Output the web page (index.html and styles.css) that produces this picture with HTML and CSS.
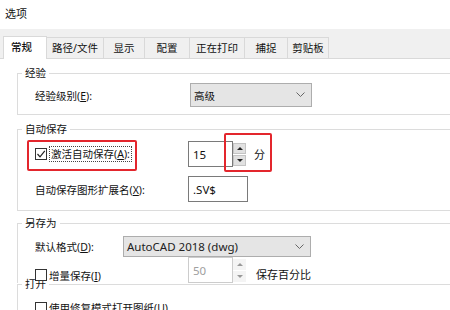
FILE: index.html
```html
<!DOCTYPE html>
<html lang="zh-CN">
<head>
    <meta charset="UTF-8">
    <title>选项</title>
    <link rel="stylesheet" href="styles.css">
</head>
<body>
    <div class="title">选项</div>
    <!-- 选项卡 -->
    <div class="tabbar">
        <div class="tab active t1">常规</div>
        <div class="tab t2">路径/文件</div>
        <div class="tab t3">显示</div>
        <div class="tab t4">配置</div>
        <div class="tab t5">正在打印</div>
        <div class="tab t6">捕捉</div>
        <div class="tab t7">剪贴板</div>
    </div>
    <div class="panel">
        <!-- 经验 -->
        <fieldset class="group g-exp">
            <legend>经验</legend>
            <div class="row">
                <span class="label">经验级别(<u>E</u>):</span>
                <div class="select sel-level">
                    <span>高级</span>
                    <svg class="chev" width="9" height="6" viewBox="0 0 9 6"><path d="M0.5 0.5 L4.5 4.5 L8.5 0.5" fill="none" stroke="#666" stroke-width="1"/></svg>
                </div>
            </div>
        </fieldset>
        <!-- 自动保存 -->
        <fieldset class="group g-auto">
            <legend>自动保存</legend>
            <div class="row mark-row">
                <label class="check">
                    <span class="box"><svg width="10" height="10" viewBox="0 0 10 10"><path d="M1.5 5 L4 7.8 L8.8 1.8" fill="none" stroke="#222" stroke-width="1.2"/></svg></span>
                    <span class="focus">激活自动保存(<u>A</u>):</span>
                </label>
                <div class="spin-field">
                    <div class="input num">15</div>
                    <div class="spinner">
                        <span class="btn up"></span>
                        <span class="btn down"></span>
                    </div>
                    <span class="unit">分</span>
                </div>
                <span class="redbox rb1"></span>
                <span class="redbox rb2"></span>
            </div>
            <div class="row row-ext">
                <span class="label">自动保存图形扩展名(<u>X</u>):</span>
                <div class="input ext">.SV$</div>
            </div>
        </fieldset>
        <!-- 另存为 -->
        <fieldset class="group g-save">
            <legend>另存为</legend>
            <div class="row row-fmt">
                <span class="label">默认格式(<u>D</u>):</span>
                <div class="select sel-fmt">
                    <span class="latin">AutoCAD 2018 (dwg)</span>
                    <svg class="chev" width="9" height="6" viewBox="0 0 9 6"><path d="M0.5 0.5 L4.5 4.5 L8.5 0.5" fill="none" stroke="#666" stroke-width="1"/></svg>
                </div>
            </div>
            <div class="row row-inc">
                <label class="check">
                    <span class="box"></span>
                    <span>增量保存(<u>I</u>)</span>
                </label>
                <div class="spin-field disabled">
                    <div class="input num">50</div>
                    <div class="spinner">
                        <span class="btn up"></span>
                        <span class="btn down"></span>
                    </div>
                    <span class="unit">保存百分比</span>
                </div>
            </div>
        </fieldset>
        <!-- 打开 -->
        <fieldset class="group g-open">
            <legend>打开</legend>
            <div class="row">
                <label class="check">
                    <span class="box"></span>
                    <span>使用修复模式打开图纸(<u>U</u>)</span>
                </label>
            </div>
        </fieldset>
    </div>
</body>
</html>
```

FILE: styles.css
```css
:root {
    --text-color: #111111;
    --line-color: #dcdcdc;
    --tab-bg: #f0f0f0;
    --tab-border: #d9d9d9;
    --control-bg: #e5e5e5;
    --control-border: #adadad;
    --input-border: #7a7a7a;
    --red: #e3262d;
}
body {
    margin: 0;
    width: 450px;
    height: 310px;
    overflow: hidden;
    background-color: #ffffff;
    color: var(--text-color);
    font-family: "Noto Sans", "Noto Sans CJK SC", sans-serif;
    font-size: 10.5px;
}
u {
    text-decoration: underline;
    text-underline-offset: 1px;
}
.title {
    height: 29px;
    line-height: 28px;
    padding-left: 5px;
    font-size: 11px;
}
/* 选项卡 */
.tabbar {
    height: 30px;
    background-color: var(--tab-bg);
    border-bottom: 1px solid var(--tab-border);
    display: flex;
    align-items: flex-end;
    padding-left: 3px;
    box-sizing: border-box;
}
.tab {
    height: 21px;
    line-height: 20px;
    border: 1px solid var(--tab-border);
    border-bottom: none;
    border-left: none;
    text-align: center;
    box-sizing: border-box;
}
.tab.active {
    height: 23px;
    background-color: #ffffff;
    border-left: 1px solid var(--tab-border);
    margin-bottom: -1px;
    text-align: left;
    padding-left: 7px;
    font-weight: 500;
}
.t1 { width: 44px; }
.t2 { width: 57px; }
.t3 { width: 41px; }
.t4 { width: 45px; }
.t5 { width: 55px; }
.t6 { width: 43px; }
.t7 { width: 41px; }
.panel {
    background-color: #ffffff;
    padding-top: 7px;
}
/* 分组框 */
.group {
    border: 1px solid var(--line-color);
    border-right: none;
    margin: 0 0 0 17px;
    padding: 0 0 0 4px;
    min-width: 0;
}
.group legend {
    padding: 0 3px;
    line-height: 14px;
}
.row {
    display: flex;
    align-items: center;
    padding-left: 13px;
    position: relative;
}
.label {
    width: 153px;
    flex-shrink: 0;
}
.g-exp {
    padding-top: 3px;
    padding-bottom: 7px;
}
.g-auto {
    margin-top: 7px;
    padding-top: 5px;
    padding-bottom: 8px;
}
.g-save {
    margin-top: 5px;
    padding-top: 6px;
    border-bottom: none;
}
.g-open {
    margin-top: -6px;
    padding-top: 9px;
}
/* 下拉框 */
.select {
    height: 24px;
    box-sizing: border-box;
    background-color: var(--control-bg);
    border: 1px solid var(--control-border);
    display: flex;
    align-items: center;
    justify-content: space-between;
    padding: 0 6px 0 3px;
}
.sel-level {
    width: 122px;
    margin-left: 2px;
}
.row-fmt .label {
    width: 88px;
}
.sel-fmt {
    width: 188px;
    height: 21px;
}
.latin {
    font-size: 11.5px;
    color: #222;
}
/* 复选框 */
.check {
    display: flex;
    align-items: center;
    gap: 2px;
}
.box {
    width: 12px;
    height: 12px;
    box-sizing: border-box;
    border: 1px solid #333;
    display: flex;
    align-items: center;
    justify-content: center;
    background-color: #ffffff;
}
.focus {
    border: 1px dotted #444;
    padding: 0 1px;
    line-height: 14px;
}
.mark-row .check {
    width: 153px;
}
/* 输入框 */
.input {
    height: 26px;
    box-sizing: border-box;
    border: 1px solid var(--input-border);
    background-color: #ffffff;
    display: flex;
    align-items: center;
    padding-left: 4px;
    font-size: 11.5px;
}
.num {
    width: 45px;
}
.ext {
    width: 60px;
}
.row-ext {
    margin-top: 9px;
}
.spin-field {
    display: flex;
    align-items: center;
}
.spinner {
    display: flex;
    flex-direction: column;
    gap: 1px;
    height: 26px;
    justify-content: center;
}
.btn {
    width: 13px;
    height: 11px;
    box-sizing: border-box;
    background-color: #e1e1e1;
    border: 1px solid #c4c4c4;
    display: flex;
    align-items: center;
    justify-content: center;
}
.btn::after {
    content: "";
    border-left: 3px solid transparent;
    border-right: 3px solid transparent;
}
.btn.up::after {
    border-bottom: 3px solid #222;
}
.btn.down::after {
    border-top: 3px solid #222;
}
.unit {
    margin-left: 8px;
    font-size: 11px;
}
.disabled .input {
    border-color: #cccccc;
    color: #a0a0a0;
}
.disabled .btn {
    background-color: #f4f4f4;
    border-color: #f4f4f4;
}
.disabled .btn.up::after {
    border-bottom-color: #999;
}
.disabled .btn.down::after {
    border-top-color: #999;
}
.disabled .unit {
    margin-left: 10px;
    margin-top: 8px;
}
.row-inc .check {
    width: 153px;
    margin-top: 10px;
}
/* 红色标注框 */
.redbox {
    position: absolute;
    border: 2px solid var(--red);
    border-radius: 2px;
    box-sizing: border-box;
}
.rb1 {
    left: 5px;
    top: -1px;
    width: 110px;
    height: 31px;
}
.rb2 {
    left: 202px;
    top: -8px;
    width: 48px;
    height: 39px;
}
```
